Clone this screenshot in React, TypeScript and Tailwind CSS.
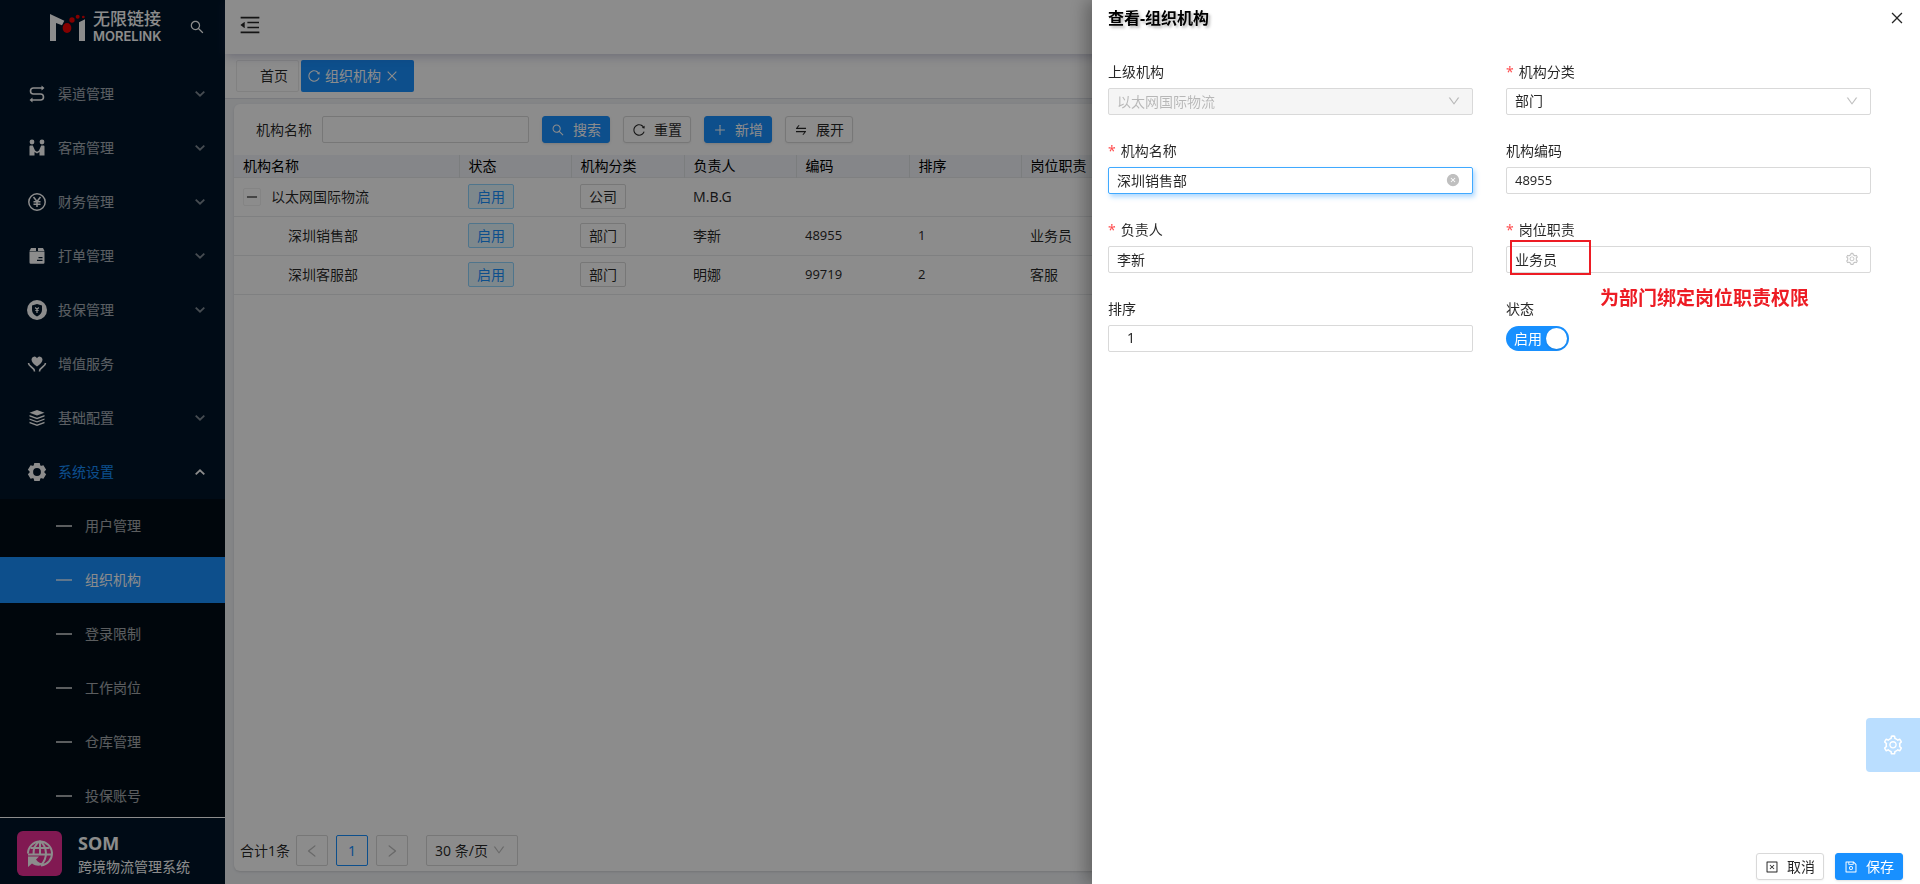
import type { ReactNode } from 'react';
import {
  AiFillCloseCircle,
  AiOutlineClose,
  AiOutlineCloseSquare,
  AiOutlineDown,
  AiOutlineLeft,
  AiOutlineMenuFold,
  AiOutlineMinus,
  AiOutlinePlus,
  AiOutlineReload,
  AiOutlineRight,
  AiOutlineSave,
  AiOutlineSearch,
  AiOutlineSetting,
  AiOutlineSwap,
} from 'react-icons/ai';

type IMenuItem = {
  title: string;
  icon: ReactNode;
  expandable?: boolean;
  open?: boolean;
};

const channelIcon = (
  <g fill="none" stroke="currentColor" strokeWidth="1.6">
    <path d="M16 4H6.5a3 3 0 0 0 0 6h7a3 3 0 0 1 0 6H4" />
    <path d="M14.500 1.500 17.500 4l-3 2.500zM5.500 13.500 2.500 16l3 2.500z" fill="currentColor" stroke="none" />
  </g>
);

const customerIcon = (
  <g fill="currentColor">
    <circle cx="5" cy="4" r="2.400" />
    <circle cx="15" cy="4" r="2.400" />
    <path d="M2.500 8.500a1 1 0 0 1 1-1h2.300l2.200 5 2 1.300 2-1.300 2.200-5h2.300a1 1 0 0 1 1 1V17.500h-5V14L10 15.500 7.500 14v3.500h-5z" />
  </g>
);

const financeIcon = (
  <g fill="none" stroke="currentColor" strokeWidth="1.500">
    <circle cx="10" cy="10" r="8.200" />
    <path d="m6.500 5 3.500 4.500L13.500 5M10 9.500V15M6.500 9.800h7M6.500 12.200h7" />
  </g>
);

const printIcon = (
  <g fill="currentColor">
    <path d="M4 2h5v3H2.500zM11 2h5l1.500 3H11z" />
    <path
      fillRule="evenodd"
      d="M2.500 5.500h15v11a1.200 1.200 0 0 1-1.200 1.200H3.700a1.200 1.200 0 0 1-1.200-1.200zM11.500 11v1.200h4V11zM10 13.700v1.300h5.500v-1.300z"
    />
  </g>
);

const insuranceIcon = (
  <g>
    <circle cx="10" cy="10" r="10" fill="currentColor" />
    <path d="M10 4 15 5.500v4.500c0 3-2 5-5 6.500-3-1.500-5-3.500-5-6.500V5.500z" fill="#001529" />
    <path d="M8.200 7.500 10 9.300l1.800-1.800M10 9.300V13M8.300 10.500h3.400" stroke="currentColor" strokeWidth="1.200" fill="none" />
  </g>
);

const serviceIcon = (
  <g fill="none" stroke="currentColor" strokeWidth="1.600">
    <path
      d="M10 12.500C6.500 10 4.500 8 4.500 5.500a2.900 2.900 0 0 1 5.500-1.300 2.900 2.900 0 0 1 5.500 1.300C15.500 8 13.500 10 10 12.500z"
      fill="currentColor"
      stroke="none"
    />
    <path d="M1.500 9c0 4 5.500 3.500 6 8.500M18.500 9c0 4-5.500 3.500-6 8.500" />
  </g>
);

const layersIcon = (
  <g fill="currentColor">
    <path d="m10 2 7.500 2.800L10 7.600 2.500 4.800z" />
    <path d="m2.500 7 7.500 2.800L17.500 7v1.400L10 11.200 2.500 8.400z" />
    <path d="m2.500 10.400 7.500 2.800 7.500-2.800v1.400L10 14.600l-7.500-2.800z" />
    <path d="m2.500 13.800 7.500 2.800 7.500-2.800v1.400L10 18l-7.500-2.800z" />
  </g>
);

const settingIcon = (
  <g fill="currentColor">
    <circle cx="10" cy="10" r="5.600" fill="none" stroke="currentColor" strokeWidth="3.400" />
    <path d="M7.300 1h5.400l.8 3h-7zM7.300 19h5.400l.8-3h-7z" />
    <path d="M7.300 1h5.400l.8 3h-7zM7.300 19h5.400l.8-3h-7z" transform="rotate(60 10 10)" />
    <path d="M7.300 1h5.400l.8 3h-7zM7.300 19h5.400l.8-3h-7z" transform="rotate(120 10 10)" />
  </g>
);

const menu: IMenuItem[] = [
  { title: '渠道管理', icon: channelIcon, expandable: true },
  { title: '客商管理', icon: customerIcon, expandable: true },
  { title: '财务管理', icon: financeIcon, expandable: true },
  { title: '打单管理', icon: printIcon, expandable: true },
  { title: '投保管理', icon: insuranceIcon, expandable: true },
  { title: '增值服务', icon: serviceIcon },
  { title: '基础配置', icon: layersIcon, expandable: true },
  { title: '系统设置', icon: settingIcon, expandable: true, open: true },
];

const subMenu = ['用户管理', '组织机构', '登录限制', '工作岗位', '仓库管理', '投保账号'];

const columns = ['机构名称', '状态', '机构分类', '负责人', '编码', '排序', '岗位职责'];

const rows = [
  { name: '以太网国际物流', type: '公司', leader: 'M.B.G', code: '', sort: '', duty: '', parent: true },
  { name: '深圳销售部', type: '部门', leader: '李新', code: '48955', sort: '1', duty: '业务员' },
  { name: '深圳客服部', type: '部门', leader: '明娜', code: '99719', sort: '2', duty: '客服' },
];

function Logo() {
  return (
    <a href="#" className="flex items-center gap-2 text-white">
      <svg viewBox="0 0 105 81" className="h-[27px] w-[35px]">
        <path d="M0 0 43 20 36 34 18 27V81H0zM87 25l18-9v65H87z" fill="#fff" />
        <ellipse cx="51" cy="42" rx="13" ry="15" fill="#f00000" />
        <circle cx="66" cy="18" r="8" fill="#f00000" />
        <circle cx="83" cy="8" r="6" fill="#f00000" />
        <circle cx="100" cy="9" r="4" fill="#f00000" />
      </svg>
      <span className="flex flex-col font-['Liberation_Sans','Noto_Sans_CJK_SC',sans-serif]">
        <span className="text-[17px] leading-[18px] font-medium">无限链接</span>
        <span className="font-['Inter'] text-[13px] leading-[14px] font-semibold">MORELINK</span>
      </span>
    </a>
  );
}

function Arrow({ open }: { open?: boolean }) {
  return (
    <svg
      viewBox="0 0 10 6"
      className={open ? 'h-[6px] w-[10px] rotate-180 text-white' : 'h-[6px] w-[10px] text-white/50'}
    >
      <path d="m.7.700 4.300 4 4.300-4" fill="none" stroke="currentColor" strokeWidth="1.800" />
    </svg>
  );
}

function Sidebar() {
  return (
    <aside className="flex h-screen w-[225px] shrink-0 flex-col bg-[#001529]">
      <div className="flex h-[67px] shrink-0 items-start justify-between pt-[11px] pr-5 pl-[50px]">
        <Logo />
        <button type="button" aria-label="search" className="pt-2 text-base text-white">
          <AiOutlineSearch />
        </button>
      </div>
      <nav className="min-h-0 flex-1 overflow-hidden">
        <ul>
          {menu.map((item) => (
            <li key={item.title} className="py-1">
              <a href="#" className="flex h-[46px] items-center pr-5 pb-px pl-[27px]">
                <svg viewBox="0 0 20 20" className="mr-[11px] h-5 w-5 text-white">
                  {item.icon}
                </svg>
                <span className={item.open ? 'flex-1 text-[#1890ff]' : 'flex-1 text-white/65'}>{item.title}</span>
                {item.expandable && <Arrow open={item.open} />}
              </a>
            </li>
          ))}
        </ul>
        <ul className="bg-[#000c17]">
          {subMenu.map((title) => (
            <li key={title} className="py-1">
              <a
                href="#"
                className={
                  title === '组织机构'
                    ? 'flex h-[46px] items-center gap-[13px] bg-[#1890ff] pb-px pl-14 text-white'
                    : 'flex h-[46px] items-center gap-[13px] pb-px pl-14 text-white/65'
                }
              >
                <span className="h-[2px] w-4 bg-white/65" />
                {title}
              </a>
            </li>
          ))}
        </ul>
      </nav>
      <div className="flex h-[67px] shrink-0 items-center gap-4 border-t border-white bg-[#001529] pl-[17px] text-white">
        <div className="mt-1 flex h-[45px] w-[45px] items-center justify-center rounded-md bg-[#eb2f96]">
          <svg viewBox="0 0 28 28" className="h-7 w-7" fill="none" stroke="#fff" strokeWidth="2">
            <path d="M2 14.500A12 12 0 1 1 15 26.500" />
            <path d="M14 2C8 6 7.500 10 7.500 15.500M14 2c7.500 6 8 17 1 24M14 2v14M4.500 9h19M2 15.500h24" />
            <path d="M2 17.500h11l-3 3c2 3 5 4 8 4-3 3-8 3-12 0l-4 3.500z" fill="#fff" stroke="none" />
          </svg>
        </div>
        <div className="mt-2">
          <div className="text-lg leading-6 font-bold">SOM</div>
          <div className="leading-6">跨境物流管理系统</div>
        </div>
      </div>
    </aside>
  );
}

type IButtonProps = {
  icon: ReactNode;
  primary?: boolean;
  children: ReactNode;
};

function Button({ icon, primary, children }: IButtonProps) {
  return (
    <button
      type="button"
      className={
        primary
          ? 'flex h-[27px] w-[68px] items-center justify-center gap-2 rounded-[3px] border border-[#1890ff] bg-[#1890ff] text-white shadow-sm'
          : 'flex h-[27px] w-[68px] items-center justify-center gap-2 rounded-[3px] border border-[#d9d9d9] bg-white text-black/85 shadow-xs'
      }
    >
      {icon}
      {children}
    </button>
  );
}

function OrgTable() {
  return (
    <table className="w-full table-fixed text-left text-black/85">
      <colgroup>
        <col className="w-[225px]" />
        <col className="w-[112px]" />
        <col className="w-[113px]" />
        <col className="w-[112px]" />
        <col className="w-[113px]" />
        <col className="w-[112px]" />
        <col />
      </colgroup>
      <thead className="bg-[#f2f5f9] text-black">
        <tr className="h-[22px] border-b border-[#e8eaec]">
          {columns.map((column) => (
            <th key={column} className="border-r border-[#e0e3e6] px-[9px] py-0 font-normal">
              {column}
            </th>
          ))}
        </tr>
      </thead>
      <tbody>
        {rows.map((row) => (
          <tr key={row.name} className="h-[39px] border-b border-[#e8eaec]">
            <td className="px-[9px] py-0">
              {row.parent ? (
                <span className="flex items-center gap-[10px]">
                  <button
                    type="button"
                    aria-label="collapse"
                    className="flex h-[18px] w-[18px] items-center justify-center rounded-xs border border-[#f0f0f0] text-sm text-black"
                  >
                    <AiOutlineMinus />
                  </button>
                  {row.name}
                </span>
              ) : (
                <span className="pl-[45px]">{row.name}</span>
              )}
            </td>
            <td className="px-[9px] py-0">
              <span className="inline-flex h-[25px] items-center rounded-xs border border-[#91d5ff] bg-[#e6f7ff] px-2 text-[#1890ff]">
                启用
              </span>
            </td>
            <td className="px-[9px] py-0">
              <span className="inline-flex h-[25px] items-center rounded-xs border border-[#d9d9d9] px-2">
                {row.type}
              </span>
            </td>
            <td className="px-[9px] py-0">{row.leader}</td>
            <td className="px-[9px] py-0 text-[13px]">{row.code}</td>
            <td className="px-[9px] py-0 text-[13px]">{row.sort}</td>
            <td className="px-[9px] py-0">{row.duty}</td>
          </tr>
        ))}
      </tbody>
    </table>
  );
}

function Pagination() {
  return (
    <div className="flex items-center pl-[6px]">
      <span className="mr-[6px] text-black/85">合计1条</span>
      <button
        type="button"
        aria-label="previous"
        className="mr-2 flex h-[31px] w-8 items-center justify-center rounded-xs border border-[#d9d9d9] text-base text-black/25"
      >
        <AiOutlineLeft />
      </button>
      <button
        type="button"
        className="mr-2 flex h-[31px] w-8 items-center justify-center rounded-xs border border-[#1890ff] text-[#1890ff]"
      >
        1
      </button>
      <button
        type="button"
        aria-label="next"
        className="mr-[18px] flex h-[31px] w-8 items-center justify-center rounded-xs border border-[#d9d9d9] text-base text-black/25"
      >
        <AiOutlineRight />
      </button>
      <span className="relative">
        <select
          aria-label="page size"
          className="h-[31px] w-[92px] appearance-none rounded-xs border border-[#d9d9d9] pl-2 text-black/85"
        >
          <option>30 条/页</option>
        </select>
        <AiOutlineDown className="pointer-events-none absolute top-2 right-3 text-sm text-black/25" />
      </span>
    </div>
  );
}

function Main() {
  return (
    <main className="flex h-screen min-w-0 flex-1 flex-col bg-[#f0f2f5]">
      <header className="z-10 flex h-[54px] shrink-0 items-center bg-white pb-1 pl-[13px] shadow-[0_2px_10px_rgba(60,60,120,0.3)]">
        <button type="button" aria-label="fold" className="text-[24px] text-black/85">
          <AiOutlineMenuFold />
        </button>
      </header>
      <div className="flex h-[45px] shrink-0 items-center gap-[2px] border-b border-[#dcdfe6] bg-white pl-[11px]">
        <a
          href="#"
          className="flex h-8 w-[63px] items-center justify-end rounded-xs border border-[#ececec] pr-[10px] text-black/85"
        >
          首页
        </a>
        <a href="#" className="flex h-8 w-[113px] items-center rounded-xs bg-[#1890ff] pl-[6px] text-white">
          <AiOutlineReload className="mr-1" />
          组织机构
          <AiOutlineClose className="ml-1" />
        </a>
      </div>
      <section className="mx-[9px] mt-[5px] mb-[13px] flex flex-1 flex-col justify-between rounded-md bg-white pb-[5px] shadow-sm">
        <div>
          <form className="flex items-center gap-[13px] py-3 pl-[22px]">
            <label className="flex items-center gap-[10px] text-black/85">
              机构名称
              <input type="text" className="h-[27px] w-[207px] rounded-xs border border-[#d9d9d9] bg-white px-2" />
            </label>
            <Button primary icon={<AiOutlineSearch />}>
              搜索
            </Button>
            <Button icon={<AiOutlineReload />}>重置</Button>
            <Button primary icon={<AiOutlinePlus />}>
              新增
            </Button>
            <Button icon={<AiOutlineSwap />}>展开</Button>
          </form>
          <OrgTable />
        </div>
        <Pagination />
      </section>
    </main>
  );
}

type IFieldProps = {
  id: string;
  label: string;
  required?: boolean;
  children: ReactNode;
};

function Field({ id, label, required, children }: IFieldProps) {
  return (
    <div className="flex h-[79px] flex-col">
      <label htmlFor={id} className="mb-[5px] flex h-[22px] items-center text-black/85">
        {required && <span className="mr-[5px] text-[#ff4d4f]">*</span>}
        {label}
      </label>
      <div className="relative">{children}</div>
    </div>
  );
}

function Drawer() {
  const control =
    'block h-[27px] w-full appearance-none rounded-xs border border-[#d9d9d9] bg-white px-2 pb-[2px] text-black/85 outline-none';

  return (
    <div
      role="dialog"
      aria-label="查看-组织机构"
      className="fixed top-0 right-0 z-30 flex h-screen w-[828px] flex-col bg-white shadow-[-6px_0_16px_rgba(0,0,0,0.3)]"
    >
      <div className="flex h-9 items-center justify-between pr-[15px] pl-4">
        <h2 className="text-base font-bold text-black [text-shadow:2px_2px_3px_rgba(0,0,0,0.3)]">查看-组织机构</h2>
        <button type="button" aria-label="close" className="text-base text-black/85">
          <AiOutlineClose />
        </button>
      </div>
      <form className="grid grid-cols-2 gap-x-[33px] pt-[25px] pr-[49px] pl-4">
        <Field id="parent" label="上级机构">
          <select
            id="parent"
            disabled
            className="block h-[27px] w-full appearance-none rounded-xs border border-[#d9d9d9] bg-[#f5f5f5] px-2 text-black/25 opacity-100"
          >
            <option>以太网国际物流</option>
          </select>
          <AiOutlineDown className="pointer-events-none absolute top-[6px] right-3 text-sm text-black/25" />
        </Field>
        <Field id="type" label="机构分类" required>
          <select id="type" className={control}>
            <option>部门</option>
          </select>
          <AiOutlineDown className="pointer-events-none absolute top-[6px] right-3 text-sm text-black/25" />
        </Field>
        <Field id="name" label="机构名称" required>
          <input
            id="name"
            type="text"
            defaultValue="深圳销售部"
            className="block h-[27px] w-full rounded-xs border border-[#40a9ff] bg-white px-2 pb-[2px] text-black/85 shadow-[2px_3px_5px_rgba(24,144,255,0.35)] outline-none"
          />
          <button type="button" aria-label="clear" className="absolute top-[6px] right-[13px] text-black/25">
            <AiFillCloseCircle />
          </button>
        </Field>
        <Field id="code" label="机构编码">
          <input id="code" type="text" defaultValue="48955" className={`${control} text-[13px]`} />
        </Field>
        <Field id="leader" label="负责人" required>
          <input id="leader" type="text" defaultValue="李新" className={control} />
        </Field>
        <Field id="duty" label="岗位职责" required>
          <input id="duty" type="text" defaultValue="业务员" className={control} />
          <AiOutlineSetting className="absolute top-[6px] right-3 text-black/25" />
          <span className="pointer-events-none absolute -top-[6px] left-1 h-[35px] w-[81px] border-2 border-[#ed1c24]" />
          <strong className="absolute top-10 left-[94px] text-[19px] leading-6 font-bold whitespace-nowrap text-[#ed1c24]">
            为部门绑定岗位职责权限
          </strong>
        </Field>
        <Field id="sort" label="排序">
          <input
            id="sort"
            type="text"
            defaultValue="1"
            className="block h-[27px] w-full rounded-xs border border-[#d9d9d9] bg-white px-[18px] pb-[2px] text-black/85 outline-none"
          />
        </Field>
        <Field id="status" label="状态">
          <label className="mt-px flex h-[25px] w-[63px] items-center justify-between rounded-full bg-[#1890ff] pr-[2px] pl-2 text-white">
            <input id="status" type="checkbox" role="switch" defaultChecked className="sr-only" />
            启用
            <span className="h-[21px] w-[21px] rounded-full bg-white shadow" />
          </label>
        </Field>
      </form>
      <div className="mt-auto flex justify-end gap-[11px] pr-[17px] pb-1">
        <Button icon={<AiOutlineCloseSquare />}>取消</Button>
        <Button primary icon={<AiOutlineSave />}>
          保存
        </Button>
      </div>
      <button
        type="button"
        aria-label="settings"
        className="absolute right-0 bottom-28 flex h-[54px] w-[54px] items-center justify-center rounded-l-sm bg-[#badeff] text-[22px] text-white"
      >
        <AiOutlineSetting />
      </button>
    </div>
  );
}

function App() {
  return (
    <div className="flex min-h-screen font-['Noto_Sans','Noto_Sans_CJK_SC',sans-serif] text-sm">
      <Sidebar />
      <Main />
      <div className="fixed inset-0 z-20 bg-black/45" />
      <Drawer />
    </div>
  );
}

export default App;
